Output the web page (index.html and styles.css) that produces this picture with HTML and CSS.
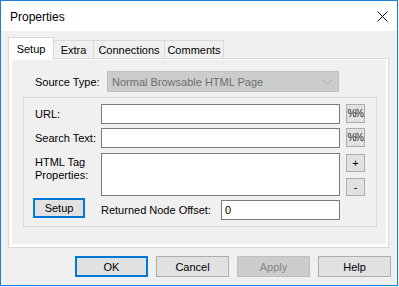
FILE: index.html
```html
<!DOCTYPE html>
<html lang="en">
<head>
    <meta charset="UTF-8">
    <title>Properties</title>
    <link rel="stylesheet" href="styles.css">
</head>
<body>
    <div class="window">
        <div class="titlebar">
            <span class="title">Properties</span>
            <svg class="close" width="11" height="11" viewBox="0 0 11 11">
                <path d="M0.5 0.5 L10.5 10.5 M10.5 0.5 L0.5 10.5" stroke="#000" stroke-width="1" fill="none"/>
            </svg>
        </div>

        <div class="dialog">
            <div class="tabctl">
                <div class="tabs">
                    <div class="tab active tab-setup">Setup</div>
                    <div class="tab tab-extra">Extra</div>
                    <div class="tab tab-conn">Connections</div>
                    <div class="tab tab-comm">Comments</div>
                </div>
                <div class="panel">
                    <div class="page">
                        <div class="source-row">
                            <span class="source-label">Source Type:</span>
                            <div class="select">
                                <span>Normal Browsable HTML Page</span>
                                <svg width="11" height="6" viewBox="0 0 11 6">
                                    <polyline points="0.5,0.5 5.5,5 10.5,0.5" stroke="#a8a8a8" fill="none"/>
                                </svg>
                            </div>
                        </div>

                        <div class="group">
                            <span class="label">URL:</span>
                            <div class="input"></div>
                            <div class="btn small pct">%%</div>

                            <span class="label">Search Text:</span>
                            <div class="input"></div>
                            <div class="btn small pct">%%</div>

                            <span class="label label-tall">HTML Tag<br>Properties:</span>
                            <div class="input area"></div>
                            <div class="plusminus">
                                <div class="btn small">+</div>
                                <div class="btn small">-</div>
                            </div>

                            <div class="btn default setup-btn">Setup</div>
                            <div class="offset-row">
                                <span>Returned Node Offset:</span>
                                <div class="input offset">0</div>
                            </div>
                        </div>
                    </div>
                </div>
            </div>

            <div class="buttons">
                <div class="btn wide default">OK</div>
                <div class="btn wide">Cancel</div>
                <div class="btn wide disabled">Apply</div>
                <div class="btn wide">Help</div>
            </div>
        </div>
    </div>
</body>
</html>
```

FILE: styles.css
```css
html {
    background-color: #f0f0f0;
}
body {
    margin: 0;
    font-family: "Liberation Sans", Arial, sans-serif;
    font-size: 11px;
    color: #000;
}
.window {
    width: 398px;
    height: 286px;
    box-sizing: border-box;
    border: 1px solid #1c7fd6;
    background-color: #f0f0f0;
    display: flex;
    flex-direction: column;
}
.titlebar {
    height: 30px;
    background-color: #fff;
    display: flex;
    align-items: center;
    justify-content: space-between;
    padding: 0 9px 0 9px;
}
.title {
    font-size: 12px;
    margin-top: 1px;
}
.close {
    display: block;
    margin-top: 1px;
}
.dialog {
    flex: 1;
    padding-top: 6px;
}
.tabctl {
    margin-left: 7px;
    width: 381px;
}
.tabs {
    display: flex;
    align-items: flex-end;
    height: 21px;
}
.tab {
    box-sizing: border-box;
    height: 18px;
    border: 1px solid #d9d9d9;
    border-bottom: none;
    background-color: #f0f0f0;
    margin-left: -1px;
    display: flex;
    align-items: center;
    justify-content: center;
    padding-top: 1px;
}
.tab.active {
    height: 22px;
    margin-left: 0;
    margin-bottom: -1px;
    background-color: #fff;
    position: relative;
    z-index: 1;
    padding-top: 0;
}
.tab-setup { width: 46px; }
.tab-extra { width: 41px; }
.tab-conn { width: 72px; }
.tab-comm { width: 60px; }
.panel {
    box-sizing: border-box;
    height: 190px;
    border: 1px solid #d9d9d9;
    background-color: #fff;
    padding: 1px 2px 3px 3px;
}
.page {
    height: 100%;
    background-color: #f0f0f0;
    overflow: hidden;
}
.source-row {
    display: flex;
    align-items: center;
    margin-top: 11px;
    padding-left: 23px;
}
.source-label {
    width: 72px;
}
.select {
    box-sizing: border-box;
    width: 232px;
    height: 21px;
    background-color: #cccccc;
    border: 1px solid #bfbfbf;
    color: #6d6d6d;
    display: flex;
    align-items: center;
    justify-content: space-between;
    padding: 0 5px 0 4px;
}
.group {
    box-sizing: border-box;
    margin: 5px 0 0 11px;
    width: 354px;
    height: 130px;
    border: 1px solid #dcdcdc;
    padding: 6px 0 0 11px;
    display: grid;
    grid-template-columns: 60px 239px 20px;
    grid-template-rows: 20px 20px 44px 20px;
    column-gap: 6px;
    row-gap: 4px;
}
.label {
    align-self: center;
    margin-top: -1px;
    white-space: nowrap;
}
.label-tall {
    align-self: start;
    margin-top: 4px;
    line-height: 13px;
}
.input {
    box-sizing: border-box;
    background-color: #fff;
    border: 1px solid #7a7a7a;
    height: 20px;
}
.input.area {
    height: 43px;
    margin-top: 1px;
}
.btn {
    box-sizing: border-box;
    background-color: #e1e1e1;
    border: 1px solid #adadad;
    display: flex;
    align-items: center;
    justify-content: center;
}
.btn.small {
    width: 19px;
    height: 19px;
}
.pct {
    font-size: 10px;
    letter-spacing: -1.5px;
    padding-right: 1px;
    color: #222;
}
.plusminus {
    display: flex;
    flex-direction: column;
    gap: 6px;
    padding-top: 2px;
}
.plusminus .btn {
    height: 18px;
}
.btn.default {
    border: 2px solid #0078d7;
}
.setup-btn {
    width: 52px;
    height: 20px;
    margin: -2px 0 0 -2px;
}
.offset-row {
    display: flex;
    align-items: center;
    justify-content: space-between;
}
.input.offset {
    width: 119px;
    display: flex;
    align-items: center;
    padding-left: 3px;
}
.buttons {
    display: flex;
    justify-content: flex-end;
    gap: 8px;
    margin-top: 8px;
    padding-right: 6px;
}
.btn.wide {
    width: 73px;
    height: 21px;
}
.btn.disabled {
    background-color: #cccccc;
    border-color: #bfbfbf;
    color: #838383;
}
```
